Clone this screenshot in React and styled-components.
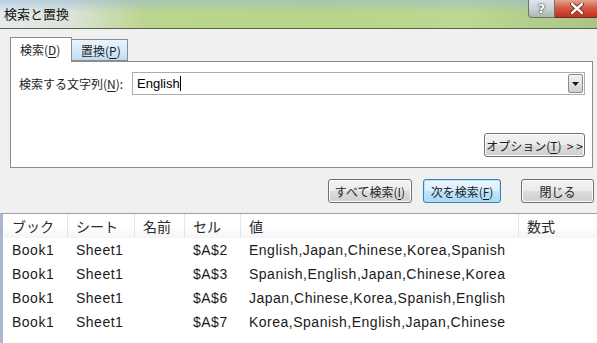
import styled, { createGlobalStyle } from 'styled-components';

const GlobalStyle = createGlobalStyle`
  html, body {
    margin: 0;
    padding: 0;
    background: #f0f0f0;
  }
  body {
    font-family: "Noto Sans CJK JP", "Liberation Sans", sans-serif;
    color: #1e1e1e;
  }
`;

const rows = [
  { book: 'Book1', sheet: 'Sheet1', name: '', cell: '$A$2', value: 'English,Japan,Chinese,Korea,Spanish' },
  { book: 'Book1', sheet: 'Sheet1', name: '', cell: '$A$3', value: 'Spanish,English,Japan,Chinese,Korea' },
  { book: 'Book1', sheet: 'Sheet1', name: '', cell: '$A$6', value: 'Japan,Chinese,Korea,Spanish,English' },
  { book: 'Book1', sheet: 'Sheet1', name: '', cell: '$A$7', value: 'Korea,Spanish,English,Japan,Chinese' },
];

const columns = '64px 67px 50px 56px 278px 1fr';

function App() {
  return (
    <>
      <GlobalStyle />
      <Window>
        <TitleBar>
          <Title>検索と置換</Title>
          <Controls>
            <HelpButton>?</HelpButton>
            <CloseButton>
              <svg width="14" height="11" viewBox="0 0 14 11">
                <path d="M2 1 L12 10 M12 1 L2 10" stroke="#5a1a10" strokeWidth="4" strokeLinecap="round" />
                <path d="M2 1 L12 10 M12 1 L2 10" stroke="#fff" strokeWidth="2.4" strokeLinecap="round" />
              </svg>
            </CloseButton>
          </Controls>
        </TitleBar>

        <Body>
          <Tabs>
            <Tab active width={62}>
              検索(<u>D</u>)
            </Tab>
            <Tab width={56}>
              置換(<u>P</u>)
            </Tab>
          </Tabs>
          <Panel>
            <FieldRow>
              <FieldLabel>
                検索する文字列(<u>N</u>):
              </FieldLabel>
              <ComboBox>
                <ComboText>
                  English<Caret />
                </ComboText>
                <DropButton>
                  <svg width="7" height="4" viewBox="0 0 7 4">
                    <path d="M0 0 H7 L3.5 4 Z" fill="#1a1a1a" />
                  </svg>
                </DropButton>
              </ComboBox>
            </FieldRow>
            <OptionRow>
              <DialogButton width={101}>
                オプション(<u>T</u>)&nbsp;&nbsp;&gt; &gt;
              </DialogButton>
            </OptionRow>
          </Panel>

          <ButtonRow>
            <DialogButton width={84}>
              すべて検索(<u>I</u>)
            </DialogButton>
            <DialogButton width={78} focused>
              次を検索(<u>F</u>)
            </DialogButton>
            <DialogButton width={73} gap={9}>
              閉じる
            </DialogButton>
          </ButtonRow>
        </Body>

        <ResultList>
          <HeaderRow>
            <HeaderCell>ブック</HeaderCell>
            <HeaderCell>シート</HeaderCell>
            <HeaderCell>名前</HeaderCell>
            <HeaderCell>セル</HeaderCell>
            <HeaderCell>値</HeaderCell>
            <HeaderCell last>数式</HeaderCell>
          </HeaderRow>
          {rows.map((r) => (
            <DataRow key={r.cell}>
              <DataCell>{r.book}</DataCell>
              <DataCell>{r.sheet}</DataCell>
              <DataCell>{r.name}</DataCell>
              <DataCell>{r.cell}</DataCell>
              <DataCell>{r.value}</DataCell>
              <DataCell />
            </DataRow>
          ))}
        </ResultList>
      </Window>
    </>
  );
}

export default App;

const Window = styled.div`
  width: 597px;
  height: 343px;
  overflow: hidden;
  display: flex;
  flex-direction: column;
  background: #f0f0f0;
`;

const TitleBar = styled.div`
  height: 28px;
  flex-shrink: 0;
  display: flex;
  justify-content: space-between;
  align-items: flex-start;
  border-bottom: 1px solid #58654a;
  background:
    linear-gradient(180deg, rgba(150, 185, 215, 0.55) 0%, rgba(150, 185, 215, 0) 45%),
    linear-gradient(90deg, #e6eaee 0%, #dbe3d8 12%, #bcd58e 24%, #b7d587 55%, #bdd892 78%, #a9c486 100%);
`;

const Title = styled.span`
  font-size: 13px;
  line-height: 28px;
  padding-left: 4px;
  color: #111;
`;

const Controls = styled.div`
  display: flex;
  margin-right: -2px;
`;

const HelpButton = styled.div`
  width: 27px;
  height: 18px;
  box-sizing: border-box;
  border: 1px solid #6c7468;
  border-top: none;
  border-radius: 0 0 0 4px;
  background: linear-gradient(180deg, #dfe6ec 0%, #c9d2d8 50%, #aab7b0 100%);
  color: #fff;
  font-family: "DejaVu Sans", sans-serif;
  font-weight: bold;
  font-size: 13px;
  line-height: 17px;
  text-align: center;
  text-shadow: 0 0 2px #333, 0 0 1px #333;
`;

const CloseButton = styled.div`
  width: 44px;
  height: 18px;
  box-sizing: border-box;
  border: 1px solid #6a3028;
  border-top: none;
  border-left: none;
  border-radius: 0 0 4px 0;
  background: linear-gradient(180deg, #e6a291 0%, #d4563f 50%, #c2301c 100%);
  display: flex;
  align-items: center;
  justify-content: center;
`;

const Body = styled.div`
  padding: 8px 3px 0 10px;
  display: flex;
  flex-direction: column;
`;

const Tabs = styled.div`
  display: flex;
  align-items: flex-end;
  height: 24px;
`;

const Tab = styled.div`
  box-sizing: border-box;
  width: ${({ width }) => width}px;
  height: ${({ active }) => (active ? '25px' : '22px')};
  margin-bottom: ${({ active }) => (active ? '-1px' : '0')};
  padding-top: ${({ active }) => (active ? '3px' : '2px')};
  padding-left: 9px;
  font-size: 12px;
  color: #1e1e1e;
  border: 1px solid #8c8c8c;
  border-bottom: ${({ active }) => (active ? 'none' : '1px solid #8c8c8c')};
  border-left: ${({ active }) => (active ? '1px solid #8c8c8c' : 'none')};
  background: ${({ active }) =>
    active ? '#ffffff' : 'linear-gradient(180deg, #eaf4fc 0%, #d6eaf9 50%, #bcdcf4 100%)'};
  position: relative;
  z-index: ${({ active }) => (active ? 1 : 0)};

  u {
    text-underline-offset: 2px;
  }
`;

const Panel = styled.div`
  height: 107px;
  box-sizing: border-box;
  margin-right: 1px;
  background: #ffffff;
  border: 1px solid #8c8c8c;
  padding: 10px 7px 10px 8px;
  display: flex;
  flex-direction: column;
  justify-content: space-between;
`;

const FieldRow = styled.div`
  display: flex;
  align-items: center;
`;

const FieldLabel = styled.span`
  width: 113px;
  flex-shrink: 0;
  font-size: 12px;
  color: #1e1e1e;

  u {
    text-underline-offset: 2px;
  }
`;

const ComboBox = styled.div`
  flex: 1;
  height: 23px;
  box-sizing: border-box;
  border: 1px solid #abadb3;
  display: flex;
  align-items: center;
  padding: 0 1px 0 4px;
`;

const ComboText = styled.span`
  flex: 1;
  font-family: "Liberation Sans", sans-serif;
  font-size: 13px;
  color: #000;
  display: flex;
  align-items: center;
`;

const Caret = styled.span`
  width: 1px;
  height: 15px;
  background: #000;
`;

const DropButton = styled.div`
  width: 15px;
  height: 19px;
  box-sizing: border-box;
  border: 1px solid #8a8a8a;
  border-radius: 2px;
  background: linear-gradient(180deg, #f4f4f4 0%, #e2e2e2 50%, #cfcfcf 100%);
  display: flex;
  align-items: center;
  justify-content: center;
`;

const OptionRow = styled.div`
  display: flex;
  justify-content: flex-end;
`;

const DialogButton = styled.div`
  width: ${({ width }) => width}px;
  height: 24px;
  box-sizing: border-box;
  margin-left: ${({ gap }) => (gap ? `${gap}px` : '0')};
  border: 1px solid ${({ focused }) => (focused ? '#3c7fb1' : '#707070')};
  border-radius: 3px;
  background: ${({ focused }) =>
    focused
      ? 'linear-gradient(180deg, #eaf6fd 0%, #d9f0fc 50%, #bee6fd 51%, #a7d9f5 100%)'
      : 'linear-gradient(180deg, #f2f2f2 0%, #ebebeb 50%, #dddddd 51%, #cfcfcf 100%)'};
  box-shadow: ${({ focused }) => (focused ? 'inset 0 0 0 1px #b6e0f6' : 'inset 0 0 0 1px #fcfcfc')};
  font-size: 12px;
  color: #1e1e1e;
  display: flex;
  align-items: center;
  justify-content: center;
  white-space: nowrap;

  u {
    text-underline-offset: 2px;
  }
`;

const ButtonRow = styled.div`
  display: flex;
  justify-content: flex-end;
  gap: 11px;
  margin-top: 11px;
`;

const ResultList = styled.div`
  flex: 1;
  margin-top: 10px;
  background: #ffffff;
  border-top: 1px solid #a0a0a0;
  border-left: 3px solid #a9b8cc;
  padding-left: 1px;
`;

const HeaderRow = styled.div`
  display: grid;
  grid-template-columns: ${columns};
  height: 24px;
  background: linear-gradient(180deg, #ffffff 0%, #ffffff 50%, #f4f5f7 100%);
`;

const HeaderCell = styled.div`
  font-size: 14px;
  color: #2a2a2a;
  padding-left: 8px;
  line-height: 24px;
  border-right: ${({ last }) => (last ? 'none' : '1px solid #e3e7ec')};
  white-space: nowrap;
`;

const DataRow = styled.div`
  display: grid;
  grid-template-columns: ${columns};
  height: 24px;
`;

const DataCell = styled.div`
  font-family: "Liberation Sans", "Noto Sans CJK JP", sans-serif;
  font-size: 14px;
  letter-spacing: 0.5px;
  color: #1a1a1a;
  padding-left: 8px;
  line-height: 24px;
  white-space: nowrap;
`;
